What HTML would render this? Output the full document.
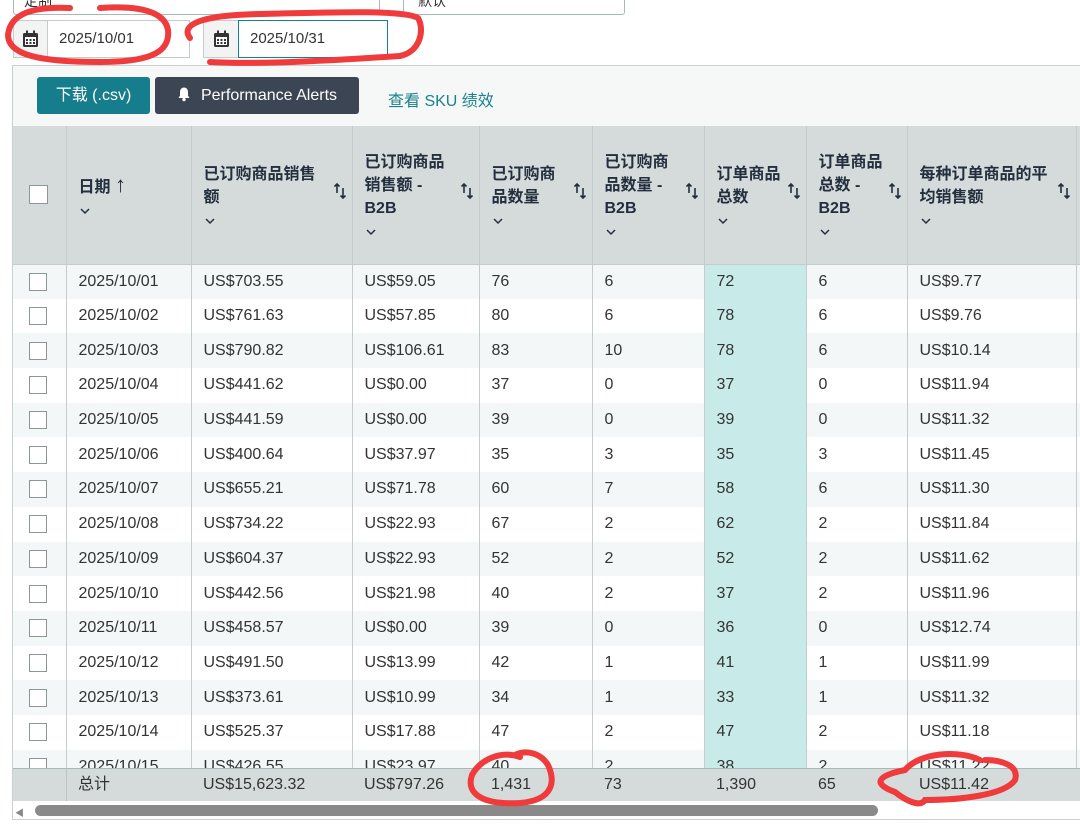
<!DOCTYPE html>
<html><head><meta charset="utf-8"><style>
*{box-sizing:border-box;margin:0;padding:0}
body{width:1080px;height:828px;overflow:hidden;background:#fff;font-family:"Liberation Sans","Noto Sans CJK SC",sans-serif;color:#333;position:relative}
.abs{position:absolute}
.sel{border:1px solid #aab7b8;border-top:none;border-radius:0 0 3px 3px;height:15px;top:0}
.ib{top:20px;height:38px;border:1px solid #c4cccc;background:#f3f3f3;display:flex;align-items:center;justify-content:center}
.inp{top:20px;height:38px;border:1px solid #c4cccc;background:#fff;font-size:15px;padding-left:11px;line-height:36px}
.wrap{left:12px;top:65px;width:1080px;height:755px;border:1px solid #c9d0d0;overflow:hidden}
.tb{position:absolute;left:0;top:0;width:100%;height:60px;background:#f6f7f7}
.btn{position:absolute;top:11px;height:37px;border-radius:3px;color:#fff;font-size:16px;line-height:37px;text-align:center}
table{position:absolute;left:0;top:60px;border-collapse:collapse;table-layout:fixed;width:1080px;font-size:16px}
td,th{border-left:1px solid #c4cccc;padding-left:12px;white-space:nowrap;overflow:hidden}
th{background:#d5dbdb;height:138px;font-weight:bold;font-size:16px;text-align:left;vertical-align:middle;position:relative;color:#232f3e;line-height:23px;white-space:nowrap;padding-right:4px;border-bottom:1px solid #c4cccc}
th .s{position:absolute;right:5px;top:56px;width:14px;height:18px}
th .c{display:block;margin-top:6px;height:12px}
td{height:34.7px;color:#333}
tr:nth-child(even) td{background:#f3f7f7}
td.h{background:#c8ebe9!important}
.cb{width:18px;height:18px;border:1px solid #8d9696;background:#fff;margin-left:4px}
.foot{position:absolute;left:0;top:702px;width:1080px;height:33px;background:#d5dbdb;border-top:1px solid #aab7b8;font-size:16px}
.foot span{position:absolute;top:0;line-height:32px}
.scr{position:absolute;left:0;top:735px;width:1080px;height:20px;background:#fff}
</style></head><body>
<svg width="0" height="0" style="position:absolute"><defs>
<symbol id="sort" viewBox="0 0 14 18"><path d="M4 2v9M1.5 4.5L4 2l2.5 2.5M10 6v10M7.5 13.5L10 16l2.5-2.5" stroke="#232f3e" stroke-width="1.6" fill="none"/></symbol>
<symbol id="chev" viewBox="0 0 12 8"><path d="M2 2l4 4 4-4" stroke="#232f3e" stroke-width="1.5" fill="none"/></symbol>
</defs></svg>
<div class="abs sel" style="left:13px;width:367px;font-size:14px;padding-left:10px;line-height:2px;color:#333">定制</div>
<div class="abs sel" style="left:403px;width:222px;font-size:14px;padding-left:14px;line-height:2px;color:#333">默认</div>
<div class="abs ib" style="left:13px;width:35px"><svg width="17" height="18" viewBox="0 0 17 18"><rect x="1" y="3" width="15" height="14" rx="1.5" fill="#333"/><rect x="3" y="7" width="11" height="8" fill="#fff"/><rect x="4" y="0.5" width="2" height="4" fill="#333"/><rect x="11" y="0.5" width="2" height="4" fill="#333"/><g fill="#333"><rect x="4" y="9" width="2" height="2"/><rect x="7.5" y="9" width="2" height="2"/><rect x="11" y="9" width="2" height="2"/><rect x="4" y="12" width="2" height="2"/><rect x="7.5" y="12" width="2" height="2"/><rect x="11" y="12" width="2" height="2"/></g></svg></div>
<div class="abs inp" style="left:47px;width:143px">2025/10/01</div>
<div class="abs ib" style="left:203px;width:36px"><svg width="17" height="18" viewBox="0 0 17 18"><rect x="1" y="3" width="15" height="14" rx="1.5" fill="#333"/><rect x="3" y="7" width="11" height="8" fill="#fff"/><rect x="4" y="0.5" width="2" height="4" fill="#333"/><rect x="11" y="0.5" width="2" height="4" fill="#333"/><g fill="#333"><rect x="4" y="9" width="2" height="2"/><rect x="7.5" y="9" width="2" height="2"/><rect x="11" y="9" width="2" height="2"/><rect x="4" y="12" width="2" height="2"/><rect x="7.5" y="12" width="2" height="2"/><rect x="11" y="12" width="2" height="2"/></g></svg></div>
<div class="abs inp" style="left:238px;width:150px;border:1.5px solid #16808f">2025/10/31</div>
<div class="abs wrap">
<div class="tb">
<div class="btn" style="left:24px;width:113px;background:#167d8c">下载 (.csv)</div>
<div class="btn" style="left:142px;width:204px;background:#3b4553"><svg width="14" height="16" viewBox="0 0 14 16" style="vertical-align:-2px;margin-right:10px"><path d="M7 1.5c-2.5 0-4 2-4 4.5v3.5L1.5 12h11L11 9.5V6c0-2.5-1.5-4.5-4-4.5z" fill="#fff"/><circle cx="7" cy="13.5" r="1.7" fill="#fff"/></svg>Performance Alerts</div>
<div style="position:absolute;left:375px;top:21px;font-size:16px;color:#1a8290">查看 SKU 绩效</div>
</div>
<table>
<colgroup><col style="width:53px"><col style="width:125px"><col style="width:161px"><col style="width:127px"><col style="width:113px"><col style="width:112px"><col style="width:102px"><col style="width:101px"><col style="width:169px"><col style="width:18px"></colgroup>
<tr><th style="border-left:none"><div class="cb" style="width:19px;height:19px"></div></th>
<th>日期 <span style="font-size:22px;font-weight:normal">↑</span><svg class="c" width="12" height="8"><use href="#chev"/></svg></th>
<th>已订购商品销售<br>额<svg class="c" width="12" height="8"><use href="#chev"/></svg><svg class="s"><use href="#sort"/></svg></th>
<th>已订购商品<br>销售额 -<br>B2B<svg class="c" width="12" height="8"><use href="#chev"/></svg><svg class="s"><use href="#sort"/></svg></th>
<th>已订购商<br>品数量<svg class="c" width="12" height="8"><use href="#chev"/></svg><svg class="s"><use href="#sort"/></svg></th>
<th>已订购商<br>品数量 -<br>B2B<svg class="c" width="12" height="8"><use href="#chev"/></svg><svg class="s"><use href="#sort"/></svg></th>
<th>订单商品<br>总数<svg class="c" width="12" height="8"><use href="#chev"/></svg><svg class="s"><use href="#sort"/></svg></th>
<th>订单商品<br>总数 -<br>B2B<svg class="c" width="12" height="8"><use href="#chev"/></svg><svg class="s"><use href="#sort"/></svg></th>
<th>每种订单商品的平<br>均销售额<svg class="c" width="12" height="8"><use href="#chev"/></svg><svg class="s"><use href="#sort"/></svg></th><th></th></tr>
<tr><td style="border-left:none"><div class="cb"></div></td><td>2025/10/01</td><td>US$703.55</td><td>US$59.05</td><td>76</td><td>6</td><td class="h">72</td><td>6</td><td>US$9.77</td><td></td></tr>
<tr><td style="border-left:none"><div class="cb"></div></td><td>2025/10/02</td><td>US$761.63</td><td>US$57.85</td><td>80</td><td>6</td><td class="h">78</td><td>6</td><td>US$9.76</td><td></td></tr>
<tr><td style="border-left:none"><div class="cb"></div></td><td>2025/10/03</td><td>US$790.82</td><td>US$106.61</td><td>83</td><td>10</td><td class="h">78</td><td>6</td><td>US$10.14</td><td></td></tr>
<tr><td style="border-left:none"><div class="cb"></div></td><td>2025/10/04</td><td>US$441.62</td><td>US$0.00</td><td>37</td><td>0</td><td class="h">37</td><td>0</td><td>US$11.94</td><td></td></tr>
<tr><td style="border-left:none"><div class="cb"></div></td><td>2025/10/05</td><td>US$441.59</td><td>US$0.00</td><td>39</td><td>0</td><td class="h">39</td><td>0</td><td>US$11.32</td><td></td></tr>
<tr><td style="border-left:none"><div class="cb"></div></td><td>2025/10/06</td><td>US$400.64</td><td>US$37.97</td><td>35</td><td>3</td><td class="h">35</td><td>3</td><td>US$11.45</td><td></td></tr>
<tr><td style="border-left:none"><div class="cb"></div></td><td>2025/10/07</td><td>US$655.21</td><td>US$71.78</td><td>60</td><td>7</td><td class="h">58</td><td>6</td><td>US$11.30</td><td></td></tr>
<tr><td style="border-left:none"><div class="cb"></div></td><td>2025/10/08</td><td>US$734.22</td><td>US$22.93</td><td>67</td><td>2</td><td class="h">62</td><td>2</td><td>US$11.84</td><td></td></tr>
<tr><td style="border-left:none"><div class="cb"></div></td><td>2025/10/09</td><td>US$604.37</td><td>US$22.93</td><td>52</td><td>2</td><td class="h">52</td><td>2</td><td>US$11.62</td><td></td></tr>
<tr><td style="border-left:none"><div class="cb"></div></td><td>2025/10/10</td><td>US$442.56</td><td>US$21.98</td><td>40</td><td>2</td><td class="h">37</td><td>2</td><td>US$11.96</td><td></td></tr>
<tr><td style="border-left:none"><div class="cb"></div></td><td>2025/10/11</td><td>US$458.57</td><td>US$0.00</td><td>39</td><td>0</td><td class="h">36</td><td>0</td><td>US$12.74</td><td></td></tr>
<tr><td style="border-left:none"><div class="cb"></div></td><td>2025/10/12</td><td>US$491.50</td><td>US$13.99</td><td>42</td><td>1</td><td class="h">41</td><td>1</td><td>US$11.99</td><td></td></tr>
<tr><td style="border-left:none"><div class="cb"></div></td><td>2025/10/13</td><td>US$373.61</td><td>US$10.99</td><td>34</td><td>1</td><td class="h">33</td><td>1</td><td>US$11.32</td><td></td></tr>
<tr><td style="border-left:none"><div class="cb"></div></td><td>2025/10/14</td><td>US$525.37</td><td>US$17.88</td><td>47</td><td>2</td><td class="h">47</td><td>2</td><td>US$11.18</td><td></td></tr>
<tr><td style="border-left:none"><div class="cb"></div></td><td>2025/10/15</td><td>US$426.55</td><td>US$23.97</td><td>40</td><td>2</td><td class="h">38</td><td>2</td><td>US$11.22</td><td></td></tr>
</table>
<div class="foot">
<div style="position:absolute;left:53px;top:0;height:33px;border-left:1px solid #bcc4c4"></div>
<span style="left:65px">总计</span><span style="left:190px">US$15,623.32</span><span style="left:351px">US$797.26</span><span style="left:478px">1,431</span><span style="left:591px">73</span><span style="left:703px">1,390</span><span style="left:805px">65</span><span style="left:906px">US$11.42</span>
</div>
<div class="scr"><div style="position:absolute;left:2px;top:5px;font-size:9px;color:#888">◀</div><div style="position:absolute;left:22px;top:4px;width:843px;height:11px;border-radius:6px;background:#8a8a8a"></div></div>
</div>
<svg class="abs" style="left:0;top:0" width="1080" height="828" fill="none" stroke="#ef3b3b" stroke-width="6" stroke-linecap="round">
<path d="M70 8 C30 6 10 15 8 35 C8 55 40 62 100 62 C155 62 170 50 168 30 C165 12 140 5 100 8"/>
<path d="M190 38 C180 25 200 15 260 14 C340 12 405 10 418 18 C425 30 420 52 400 56 C340 60 260 65 210 62"/>
<path d="M520 757 C500 750 480 760 472 775 C465 795 485 805 520 803 C555 800 555 780 548 765 C540 752 525 750 515 755"/>
<path d="M980 760 C960 750 920 752 905 770 C880 775 870 783 895 792 C905 800 920 808 925 800 C960 800 1005 795 1015 780 C1020 765 1000 760 985 760"/>
</svg>
</body></html>
